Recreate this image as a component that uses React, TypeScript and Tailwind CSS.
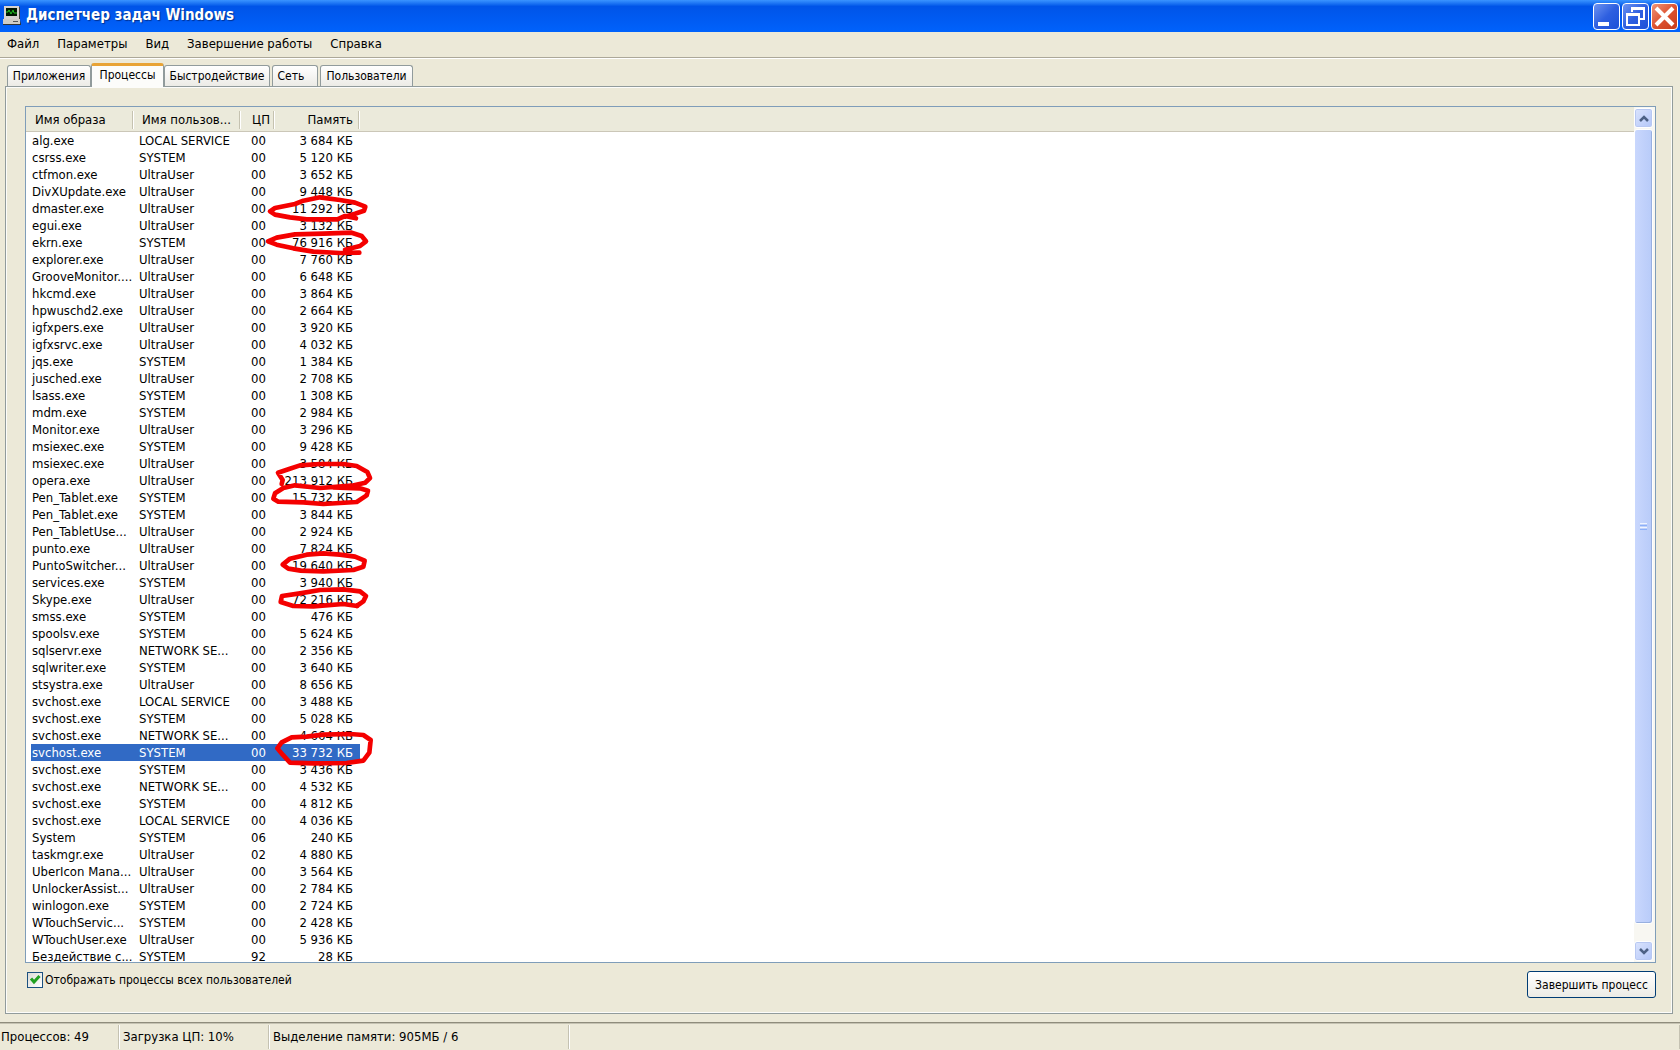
import React from 'react';

interface Process {
  name: string;
  user: string;
  cpu: string;
  memory: string;
  selected?: boolean;
}

const SYS = 'SYSTEM';
const USR = 'UltraUser';
const LOCAL = 'LOCAL SERVICE';
const NET = 'NETWORK SE...';

const processes: Process[] = [
  { name: 'alg.exe', user: LOCAL, cpu: '00', memory: '3 684' },
  { name: 'csrss.exe', user: SYS, cpu: '00', memory: '5 120' },
  { name: 'ctfmon.exe', user: USR, cpu: '00', memory: '3 652' },
  { name: 'DivXUpdate.exe', user: USR, cpu: '00', memory: '9 448' },
  { name: 'dmaster.exe', user: USR, cpu: '00', memory: '11 292' },
  { name: 'egui.exe', user: USR, cpu: '00', memory: '3 132' },
  { name: 'ekrn.exe', user: SYS, cpu: '00', memory: '76 916' },
  { name: 'explorer.exe', user: USR, cpu: '00', memory: '7 760' },
  { name: 'GrooveMonitor....', user: USR, cpu: '00', memory: '6 648' },
  { name: 'hkcmd.exe', user: USR, cpu: '00', memory: '3 864' },
  { name: 'hpwuschd2.exe', user: USR, cpu: '00', memory: '2 664' },
  { name: 'igfxpers.exe', user: USR, cpu: '00', memory: '3 920' },
  { name: 'igfxsrvc.exe', user: USR, cpu: '00', memory: '4 032' },
  { name: 'jqs.exe', user: SYS, cpu: '00', memory: '1 384' },
  { name: 'jusched.exe', user: USR, cpu: '00', memory: '2 708' },
  { name: 'lsass.exe', user: SYS, cpu: '00', memory: '1 308' },
  { name: 'mdm.exe', user: SYS, cpu: '00', memory: '2 984' },
  { name: 'Monitor.exe', user: USR, cpu: '00', memory: '3 296' },
  { name: 'msiexec.exe', user: SYS, cpu: '00', memory: '9 428' },
  { name: 'msiexec.exe', user: USR, cpu: '00', memory: '3 584' },
  { name: 'opera.exe', user: USR, cpu: '00', memory: '213 912' },
  { name: 'Pen_Tablet.exe', user: SYS, cpu: '00', memory: '15 732' },
  { name: 'Pen_Tablet.exe', user: SYS, cpu: '00', memory: '3 844' },
  { name: 'Pen_TabletUse...', user: USR, cpu: '00', memory: '2 924' },
  { name: 'punto.exe', user: USR, cpu: '00', memory: '7 824' },
  { name: 'PuntoSwitcher...', user: USR, cpu: '00', memory: '19 640' },
  { name: 'services.exe', user: SYS, cpu: '00', memory: '3 940' },
  { name: 'Skype.exe', user: USR, cpu: '00', memory: '72 216' },
  { name: 'smss.exe', user: SYS, cpu: '00', memory: '476' },
  { name: 'spoolsv.exe', user: SYS, cpu: '00', memory: '5 624' },
  { name: 'sqlservr.exe', user: NET, cpu: '00', memory: '2 356' },
  { name: 'sqlwriter.exe', user: SYS, cpu: '00', memory: '3 640' },
  { name: 'stsystra.exe', user: USR, cpu: '00', memory: '8 656' },
  { name: 'svchost.exe', user: LOCAL, cpu: '00', memory: '3 488' },
  { name: 'svchost.exe', user: SYS, cpu: '00', memory: '5 028' },
  { name: 'svchost.exe', user: NET, cpu: '00', memory: '4 664' },
  { name: 'svchost.exe', user: SYS, cpu: '00', memory: '33 732', selected: true },
  { name: 'svchost.exe', user: SYS, cpu: '00', memory: '3 436' },
  { name: 'svchost.exe', user: NET, cpu: '00', memory: '4 532' },
  { name: 'svchost.exe', user: SYS, cpu: '00', memory: '4 812' },
  { name: 'svchost.exe', user: LOCAL, cpu: '00', memory: '4 036' },
  { name: 'System', user: SYS, cpu: '06', memory: '240' },
  { name: 'taskmgr.exe', user: USR, cpu: '02', memory: '4 880' },
  { name: 'UberIcon Mana...', user: USR, cpu: '00', memory: '3 564' },
  { name: 'UnlockerAssist...', user: USR, cpu: '00', memory: '2 784' },
  { name: 'winlogon.exe', user: SYS, cpu: '00', memory: '2 724' },
  { name: 'WTouchServic...', user: SYS, cpu: '00', memory: '2 428' },
  { name: 'WTouchUser.exe', user: USR, cpu: '00', memory: '5 936' },
  { name: 'Бездействие с...', user: SYS, cpu: '92', memory: '28' },
];

const menu = ['Файл', 'Параметры', 'Вид', 'Завершение работы', 'Справка'];

function TitleBar() {
  const blue = 'h-[27px] w-[27px] rounded border border-white bg-linear-to-br from-[#6d92f0] via-[#2e5fe0] to-[#1b50d8]';
  return (
    <header className="flex h-8 shrink-0 items-center bg-linear-to-b from-[#3a94ff] from-0% via-[#0054e8] via-20% to-[#0062fc] pr-0.5 pl-0.5">
      <svg width="20" height="20" viewBox="0 0 20 20" aria-hidden="true">
        <path d="M2 0h15v13H2z" fill="#d6d3ce" />
        <path d="M17 1h1v13H3v-1h14z" fill="#444" />
        <path d="M4 2h11v8H4z" fill="#001800" />
        <path d="M4 6h2l1-2l2 4l2-4l1 3h3" fill="none" stroke="#22c322" />
        <path d="M1 13h17v5H1z" fill="#d0cdc6" />
        <path d="M1 18h17l1-4v5H1z" fill="#333" />
        <path d="M11 15h5v1h-5z" fill="#555" />
      </svg>
      <h1 className="ml-1 text-[15px] font-bold text-white [text-shadow:1px_1px_1px_#003090]">
        Диспетчер задач Windows
      </h1>
      <div className="ml-auto flex gap-0.5">
        <button aria-label="Свернуть" className={blue}>
          <svg width="25" height="25" viewBox="0 0 25 25"><path d="M4 18h11v4H4z" fill="#fff" /></svg>
        </button>
        <button aria-label="Восстановить" className={blue}>
          <svg width="25" height="25" viewBox="0 0 25 25" fill="none" stroke="#fff" strokeWidth="2">
            <path d="M9 8V4h12v11h-4M9 5h12" />
            <path d="M4 10h12v11H4zM4 11h12" />
          </svg>
        </button>
        <button aria-label="Закрыть" className="h-[27px] w-[27px] rounded border border-white bg-linear-to-br from-[#ee9478] via-[#dd5230] to-[#c83c18]">
          <svg width="25" height="25" viewBox="0 0 25 25"><path d="M4 4l17 17M21 4L4 21" stroke="#fff" strokeWidth="4" /></svg>
        </button>
      </div>
    </header>
  );
}

function Tabs() {
  const tab = 'flex h-[21px] items-center justify-center rounded-t-[3px] border border-b-0 border-[#919b9c] bg-linear-to-b from-white to-[#ecebe6]';
  return (
    <div role="tablist" className="flex items-end pl-0.5">
      <button role="tab" className={`${tab} w-[84px]`}>Приложения</button>
      <button role="tab" aria-selected="true" className="relative -mb-px flex h-6 w-[73px] items-center justify-center rounded-t-[3px] border border-t-[3px] border-b-0 border-[#919b9c] border-t-[#e8a335] bg-[#fcfcfa] pb-1">
        Процессы
      </button>
      <button role="tab" className={`${tab} w-[106px]`}>Быстродействие</button>
      <button role="tab" className={`${tab} ml-0.5 w-[46px] pr-2`}>Сеть</button>
      <button role="tab" className={`${tab} ml-0.5 w-[93px]`}>Пользователи</button>
    </div>
  );
}

function ProcessTable() {
  const head = 'relative h-[25px] border-b border-[#cbc7b8] bg-[#ebeadb] p-0 pt-0.5 font-normal leading-4';
  const line = 'absolute top-1 right-0 h-[18px] w-0.5 border-l border-[#c5c2b0] bg-white';
  return (
    <table className="w-full table-fixed border-separate border-spacing-0 text-[13px] whitespace-nowrap">
      <colgroup>
        <col className="w-[108px]" />
        <col className="w-[107px]" />
        <col className="w-[34px]" />
        <col className="w-[85px]" />
        <col />
      </colgroup>
      <thead>
        <tr>
          <th className={`${head} pl-[9px] text-left`}>Имя образа<i className={line} /></th>
          <th className={`${head} pl-2 text-left`}>Имя пользов...<i className={line} /></th>
          <th className={`${head} pr-[5px] text-right`}>ЦП<i className={line} /></th>
          <th className={`${head} pr-[7px] text-right`}>Память<i className={line} /></th>
          <td className={head} />
        </tr>
      </thead>
      <tbody>
        {processes.map((p, i) => (
          <tr key={i} className={p.selected ? 'text-white *:nth-[-n+4]:bg-[#316ac5]' : ''}>
            <td className="h-[17px] border-l-[5px] border-white bg-clip-padding p-0 pl-px leading-4">{p.name}</td>
            <td className="h-[17px] p-0 pl-[5px] leading-4">{p.user}</td>
            <td className="h-[17px] p-0 pr-[9px] text-right leading-4">{p.cpu}</td>
            <td className="h-[17px] p-0 pr-[7px] text-right leading-4">{p.memory} КБ</td>
            <td className="p-0" />
          </tr>
        ))}
      </tbody>
    </table>
  );
}

// hand-drawn circles over the heaviest processes
function Marks() {
  return (
    <svg className="pointer-events-none absolute top-[73px] left-[214px]" width="150" height="600" viewBox="0 0 450 1800" fill="none" stroke="#f40000" strokeWidth="14" strokeLinecap="round" strokeLinejoin="round" aria-hidden="true">
      <path d="M348 115L315 108L292 118L200 118L150 112L105 104L90 94L105 84L165 72L190 62L240 52L300 60L345 68L376 80L372 92L345 101L315 110" />
      <path d="M358 218L300 219L220 215L160 205L110 194L84 184L110 173L165 163L250 161L335 158L365 168L378 184L360 198L315 209" />
      <g transform="translate(0 810)">
        <path d="M125 102L128 90L114 68L145 58L180 46L240 42L310 42L350 48L382 66L390 84L376 98L335 107L240 114L165 106L130 114L105 130L100 146L115 155L190 157L250 162L350 156L380 136L384 122L360 115L280 112" />
        <path d="M182 362L145 356L128 344L150 326L200 314L250 310L300 314L345 320L374 332L370 350L340 360L250 364L180 362" />
        <path d="M352 468L310 462L220 469L160 468L122 456L126 438L180 430L240 420L310 418L360 424L378 438L370 454L350 468" />
      </g>
      <g transform="translate(0 1620)">
        <path d="M128 104L112 85L125 67L155 52L200 50L250 44L330 42L370 45L392 60L388 98L370 122L320 129L220 130L150 128L128 104" />
      </g>
    </svg>
  );
}

function ScrollBar() {
  const arrow = 'flex h-5 shrink-0 items-center justify-center rounded-[3px] border border-white bg-linear-to-br from-[#dbe4fd] to-[#b3c6f8] shadow-[inset_0_0_0_1px_#b8c8f2]';
  return (
    <div className="flex w-[21px] shrink-0 flex-col gap-px bg-[#f8f7f2] py-px pr-0.5">
      <button aria-label="Вверх" className={arrow}>
        <svg width="10" height="7" viewBox="0 0 10 7"><path d="M1 6l4-4L9 6" fill="none" stroke="#4d6185" strokeWidth="2.500" /></svg>
      </button>
      <div className="flex min-h-0 flex-1 flex-col">
        <div className="flex h-[98%] items-center justify-center rounded-[3px] border border-white bg-linear-to-r from-[#c9d7fd] to-[#b8cbf9] shadow-[inset_-1px_-1px_0_#98b0e0]">
          <span className="flex flex-col gap-px">
            <i className="h-px w-[7px] bg-[#eef4fe]" />
            <i className="h-px w-[7px] bg-[#8cb0f8]" />
            <i className="h-px w-[7px] bg-[#eef4fe]" />
            <i className="h-px w-[7px] bg-[#8cb0f8]" />
          </span>
        </div>
      </div>
      <button aria-label="Вниз" className={arrow}>
        <svg width="10" height="7" viewBox="0 0 10 7"><path d="M1 1l4 4L9 1" fill="none" stroke="#4d6185" strokeWidth="2.500" /></svg>
      </button>
    </div>
  );
}

export default function App() {
  return (
    <div className="flex h-screen flex-col bg-[#ece9d8] font-['DejaVu_Sans_Condensed','DejaVu_Sans',sans-serif] text-xs text-black">
      <TitleBar />
      <nav className="flex h-[26px] shrink-0 items-center gap-[18px] border-b border-[#aca899] pb-px pl-[7px] text-[13px]">
        {menu.map((m) => (
          <button key={m}>{m}</button>
        ))}
      </nav>

      <main className="flex min-h-0 flex-1 flex-col border-t border-white px-[5px] pt-1 pb-2">
        <Tabs />
        <section className="mr-0.5 flex min-h-0 flex-1 flex-col border border-[#919b9c] px-4 pt-[19px] pb-[15px] shadow-[inset_1px_1px_0_#fcfcfa,inset_-1px_-1px_0_#fcfcfa]">
          <div className="ml-[3px] flex min-h-0 flex-1 overflow-hidden border border-[#7f9db9] bg-white">
            <div className="relative min-w-0 flex-1 overflow-hidden">
              <ProcessTable />
              <Marks />
            </div>
            <ScrollBar />
          </div>
          <div className="mt-2 ml-[3px] flex items-start">
            <label className="flex items-center gap-0.5 pl-0.5">
              <span className="relative mt-px flex h-4 w-4">
                <input type="checkbox" defaultChecked className="h-4 w-4 appearance-none border border-[#1c5180] bg-linear-to-br from-[#dcdcd7] to-white" />
                <svg className="pointer-events-none absolute top-0.5 left-0.5" width="12" height="12" viewBox="0 0 12 12"><path d="M2 4.500L5 8L10.500 2" fill="none" stroke="#21a121" strokeWidth="3" /></svg>
              </span>
              Отображать процессы всех пользователей
            </label>
            <button className="ml-auto h-[27px] w-[129px] rounded-[3px] border border-[#003c74] bg-linear-to-b from-white to-[#ecebe5]">
              Завершить процесс
            </button>
          </div>
        </section>
      </main>

      <footer className="flex h-7 shrink-0 items-center border-t border-[#8f8c7c] text-[13px] shadow-[inset_0_1px_0_#c5c2b2]">
        <span className="flex h-6 w-[119px] items-center border-r border-[#c5c2b2] pl-px">Процессов: 49</span>
        <span className="flex h-6 w-[150px] items-center border-r border-l border-[#c5c2b2] border-l-white pl-[3px]">Загрузка ЦП: 10%</span>
        <span className="flex h-6 w-[300px] items-center border-r border-l border-[#c5c2b2] border-l-white pl-[3px]">Выделение памяти: 905МБ / 6</span>
        <span className="h-6 flex-1 border-r border-l border-[#c5c2b2] border-l-white" />
      </footer>
    </div>
  );
}
